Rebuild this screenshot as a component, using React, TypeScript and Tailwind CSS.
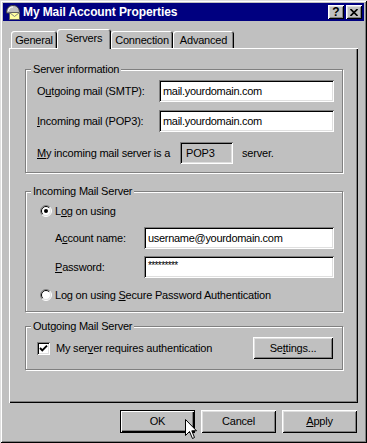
import React from "react";

const FACE = "bg-[#c0c0c0]";
const RAISED =
  "shadow-[inset_1px_1px_0_#fff,inset_-1px_-1px_0_#000,inset_2px_2px_0_#dfdfdf,inset_-2px_-2px_0_#808080]";
const SUNKEN =
  "shadow-[inset_1px_1px_0_#808080,inset_-1px_-1px_0_#fff,inset_2px_2px_0_#000,inset_-2px_-2px_0_#dfdfdf]";

function U({ children }: { children: React.ReactNode }) {
  return <span className="underline decoration-1 underline-offset-1">{children}</span>;
}

function MailIcon() {
  return (
    <svg width="16" height="16" viewBox="0 0 16 16" className="shrink-0">
      <path d="M1.5 9 C1.5 4 4 1.5 8 1.5 C12 1.5 14.5 4 14.5 9 Z" fill="#c0c0c0" stroke="#404040" />
      <path d="M3.5 7 C3.5 4.5 5.5 3 8 3" fill="none" stroke="#fff" />
      <rect x="4.5" y="8.5" width="10" height="7" fill="#ffffa0" stroke="#606060" />
      <path d="M4.5 8.5 L9.5 12.5 L14.5 8.5" fill="none" stroke="#808080" />
    </svg>
  );
}

function TitleBtn({ children }: { children: React.ReactNode }) {
  return (
    <div className={`w-[16px] h-[14px] ${FACE} ${RAISED} flex items-center justify-center`}>{children}</div>
  );
}

function Tab({ w, selected, children }: { w: string; selected?: boolean; children: React.ReactNode }) {
  return (
    <div
      className={`${w} ${FACE} rounded-t-[3px] flex justify-center leading-[13px] pt-[3px] ${
        selected
          ? "relative z-10 h-[20px] shadow-[inset_1px_1px_0_#fff,inset_-1px_0_0_#000,inset_-2px_0_0_#808080]"
          : "h-[17px] mb-[1px] shadow-[inset_1px_1px_0_#fff,inset_-1px_0_0_#000,inset_-2px_0_0_#808080]"
      }`}
    >
      <span>{children}</span>
    </div>
  );
}

function Group({
  label,
  h,
  mt,
  children,
}: {
  label: string;
  h: string;
  mt: string;
  children: React.ReactNode;
}) {
  return (
    <div
      className={`relative w-[318px] ${h} ${mt} border border-[#808080] shadow-[inset_1px_1px_0_#fff,1px_1px_0_#fff]`}
    >
      <span className={`absolute left-[5px] -top-[7px] px-[2px] ${FACE} leading-[13px]`}>{label}</span>
      {children}
    </div>
  );
}

function Input({ w, children }: { w: string; children?: React.ReactNode }) {
  return (
    <div
      className={`${w} h-[22px] bg-white ${SUNKEN} flex items-center pl-[4px] leading-[13px] tracking-[-0.3px]`}
    >
      {children}
    </div>
  );
}

function Radio({ checked }: { checked?: boolean }) {
  return (
    <svg width="12" height="12" viewBox="0 0 12 12" className="shrink-0">
      <circle cx="6" cy="6" r="5" fill="#fff" />
      <path d="M2.1 9.9 A5.5 5.5 0 0 1 9.9 2.1" stroke="#808080" fill="none" />
      <path d="M9.9 2.1 A5.5 5.5 0 0 1 2.1 9.9" stroke="#fff" fill="none" />
      <path d="M2.8 9.2 A4.5 4.5 0 0 1 9.2 2.8" stroke="#000" fill="none" />
      <path d="M9.2 2.8 A4.5 4.5 0 0 1 2.8 9.2" stroke="#dfdfdf" fill="none" />
      {checked && <circle cx="6" cy="6" r="2" fill="#000" />}
    </svg>
  );
}

function Checkbox() {
  return (
    <div className={`w-[13px] h-[13px] bg-white ${SUNKEN} shrink-0 flex items-center justify-center`}>
      <svg width="9" height="9" viewBox="0 0 9 9">
        <path d="M1 4 L3.3 6.4 L8 1.6" stroke="#000" strokeWidth="1.9" fill="none" />
      </svg>
    </div>
  );
}

function Button({ w, focused, children }: { w: string; focused?: boolean; children: React.ReactNode }) {
  return (
    <div
      className={`${w} h-[23px] ${FACE} flex items-center justify-center leading-[13px] ${
        focused
          ? "border border-black shadow-[inset_1px_1px_0_#fff,inset_-1px_-1px_0_#000,inset_-2px_-2px_0_#808080]"
          : RAISED
      }`}
    >
      <span>{children}</span>
    </div>
  );
}

export default function App() {
  return (
    <div
      className={`relative w-[367px] h-[443px] ${FACE} p-[3px] font-['Liberation_Sans',Arial,sans-serif] text-[11px] tracking-[-0.2px] text-black shadow-[inset_1px_1px_0_#dfdfdf,inset_-1px_-1px_0_#000,inset_2px_2px_0_#fff,inset_-2px_-2px_0_#808080]`}
    >
      {/* Title bar */}
      <div className="h-[18px] bg-[#000080] flex items-center pl-[2px] pr-[2px]">
        <MailIcon />
        <span className="ml-[2px] text-white font-bold text-[12px] tracking-[-0.1px] leading-none">
          My Mail Account Properties
        </span>
        <div className="ml-auto flex gap-[2px]">
          <TitleBtn>
            <span className="font-bold text-[12px] leading-none tracking-normal">?</span>
          </TitleBtn>
          <TitleBtn>
            <svg width="8" height="7" viewBox="0 0 8 7">
              <path d="M0.5 0 L7.5 7 M7.5 0 L0.5 7" stroke="#000" strokeWidth="1.6" />
            </svg>
          </TitleBtn>
        </div>
      </div>

      {/* Tabs */}
      <div className="mt-[8px] ml-[6px] h-[20px] flex items-end pl-[2px]">
        <Tab w="w-[46px]">General</Tab>
        <Tab w="w-[54px]" selected>
          Servers
        </Tab>
        <Tab w="w-[62px]">Connection</Tab>
        <Tab w="w-[61px]">Advanced</Tab>
      </div>

      {/* Panel */}
      <div
        className={`-mt-[1px] ml-[6px] w-[349px] h-[355px] pt-[21px] pl-[16px] shadow-[inset_1px_1px_0_#fff,inset_-1px_-1px_0_#000,inset_-2px_-2px_0_#808080]`}
      >
        <Group label="Server information" h="h-[104px]" mt="mt-0">
          <div className="pl-[11px]">
            <div className="mt-[10px] flex items-center h-[22px]">
              <span className="w-[122px]">
                O<U>u</U>tgoing mail (SMTP):
              </span>
              <Input w="w-[175px]">mail.yourdomain.com</Input>
            </div>
            <div className="mt-[8px] flex items-center h-[22px]">
              <span className="w-[122px]">
                <U>I</U>ncoming mail (POP3):
              </span>
              <Input w="w-[175px]">mail.yourdomain.com</Input>
            </div>
            <div className="mt-[10px] flex items-center h-[22px]">
              <span className="w-[143px]">
                <U>M</U>y incoming mail server is a
              </span>
              <div className={`w-[53px] h-[22px] ${FACE} ${SUNKEN} flex items-center pl-[6px]`}>POP3</div>
              <span className="ml-[9px]">server.</span>
            </div>
          </div>
        </Group>

        <Group label="Incoming Mail Server" h="h-[121px]" mt="mt-[18px]">
          <div className="mt-[11px] h-[16px] flex items-center pl-[14px] gap-[3px]">
            <Radio checked />
            <span>
              L<U>o</U>g on using
            </span>
          </div>
          <div className="mt-[8px] flex items-center h-[22px] pl-[29px]">
            <span className="w-[89px]">
              A<U>c</U>count name:
            </span>
            <Input w="w-[190px]">username@yourdomain.com</Input>
          </div>
          <div className="mt-[7px] flex items-center h-[22px] pl-[29px]">
            <span className="w-[89px]">
              <U>P</U>assword:
            </span>
            <Input w="w-[190px]">
              <span className="text-[10px] tracking-[-0.6px] -mt-[3px]">*********</span>
            </Input>
          </div>
          <div className="mt-[9px] h-[16px] flex items-center pl-[14px] gap-[3px]">
            <Radio />
            <span>
              Log on using <U>S</U>ecure Password Authentication
            </span>
          </div>
        </Group>

        <Group label="Outgoing Mail Server" h="h-[44px]" mt="mt-[14px]">
          <div className="mt-[10px] h-[22px] flex items-center pl-[11px] pr-[9px]">
            <Checkbox />
            <span className="ml-[6px]">
              My ser<U>v</U>er requires authentication
            </span>
            <div className={`ml-auto w-[80px] h-[22px] ${FACE} ${RAISED} flex items-center justify-center`}>
              <span>
                Se<U>t</U>tings...
              </span>
            </div>
          </div>
        </Group>
      </div>

      {/* Bottom buttons */}
      <div className="mt-[7px] flex justify-end gap-[6px] pr-[7px]">
        <Button w="w-[75px]" focused>
          OK
        </Button>
        <Button w="w-[75px]">Cancel</Button>
        <Button w="w-[75px]">
          <U>A</U>pply
        </Button>
      </div>

      {/* Mouse cursor */}
      <svg
        width="13"
        height="21"
        viewBox="0 0 13 21"
        className="absolute left-[185px] top-[419px] pointer-events-none"
      >
        <path
          d="M0.5 0.5 L0.5 16.5 L4.5 12.5 L7.5 19.5 L9.5 18.5 L6.8 11.8 L11.5 11.8 Z"
          fill="#fff"
          stroke="#000"
          strokeLinejoin="miter"
        />
      </svg>
    </div>
  );
}
